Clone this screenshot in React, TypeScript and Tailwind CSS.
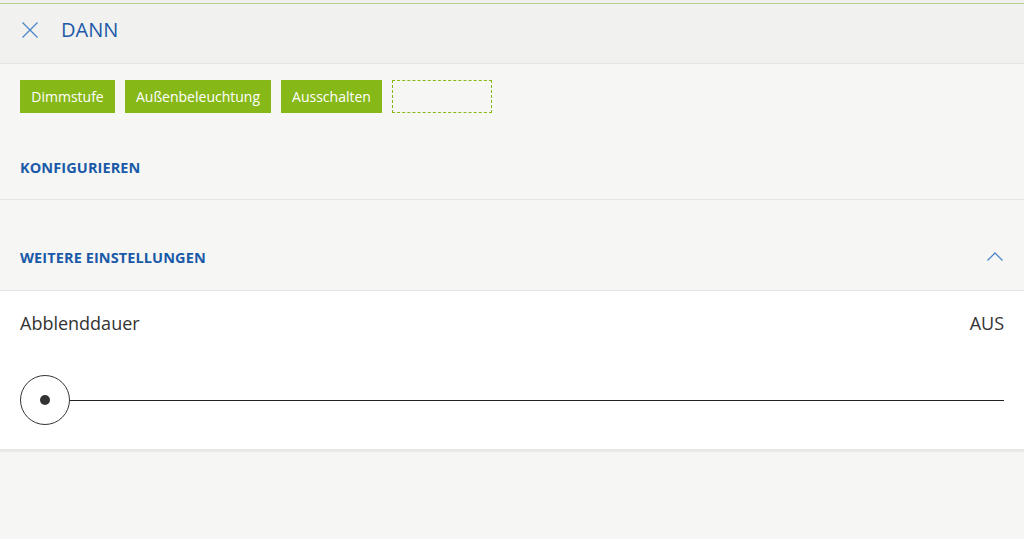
import React from "react";

export default function App() {
  const font = { fontFamily: '"Open Sans", "Noto Sans", sans-serif' };
  const buttons: [string, string][] = [
    ["Dimmstufe", "w-[95px]"],
    ["Außenbeleuchtung", "w-[146px]"],
    ["Ausschalten", "w-[101px]"],
  ];
  return (
    <div className="min-h-[539px] w-full bg-[#f6f6f4]" style={font}>
      <div className="h-[3px] bg-[#f0f0ef]" />
      <div className="h-px bg-[#b7d08c]" />
      <div className="flex h-[60px] items-start border-b border-[#e4e4e2] bg-[#f1f1f0] pl-[22px] pt-[18px]">
        <svg width="16" height="16" viewBox="0 0 16 16" className="shrink-0">
          <path d="M0.5 0.5 L15.5 15.5 M15.5 0.5 L0.5 15.5" stroke="#4a86c8" strokeWidth="1.3" fill="none" />
        </svg>
        <span className="ml-[23px] -mt-[1px] text-[20px] leading-[18px] text-[#1d5aa8]">DANN</span>
      </div>
      <div className="px-5 pt-4">
        <div className="flex gap-[10px]">
          {buttons.map(([t, w]) => (
            <div key={t} className={`flex h-[33px] items-center justify-center whitespace-nowrap bg-[#86b817] text-[14px] text-white ${w}`}>
              {t}
            </div>
          ))}
          <div className="h-[33px] w-[100px] border border-dashed border-[#86b817]" />
        </div>
        <div className="flex h-[86px] items-center pt-[23px] text-[14.5px] font-bold tracking-[0.1px] text-[#1a5aa8]">
          KONFIGURIEREN
        </div>
      </div>
      <div className="border-t border-[#e4e4e2]" />
      <div className="flex h-[90px] items-center justify-between px-5 pt-[25px]">
        <span className="text-[14.5px] font-bold tracking-[0.1px] text-[#1a5aa8]">WEITERE EINSTELLUNGEN</span>
        <svg width="16" height="9" viewBox="0 0 16 9" className="mr-[1px] mt-[-3px]">
          <path d="M0.5 8.5 L8 1 L15.5 8.5" stroke="#4a86c8" strokeWidth="1.3" fill="none" />
        </svg>
      </div>
      <div className="border-t border-[#e4e4e2] bg-white px-5">
        <div className="flex h-[65px] items-center justify-between pb-[1px] text-[18px] text-[#333]">
          <span>Abblenddauer</span>
          <span>AUS</span>
        </div>
        <div className="flex h-[93px] items-start pt-[19px]">
          <div className="flex h-[50px] w-[50px] shrink-0 items-center justify-center rounded-full border-[1.3px] border-[#333]">
            <div className="h-[10px] w-[10px] rounded-full bg-[#333]" />
          </div>
          <div className="mt-[24.5px] h-px flex-1 bg-[#222]" />
        </div>
      </div>
      <div className="h-[3px] bg-[#e8e8e6]" />
    </div>
  );
}
